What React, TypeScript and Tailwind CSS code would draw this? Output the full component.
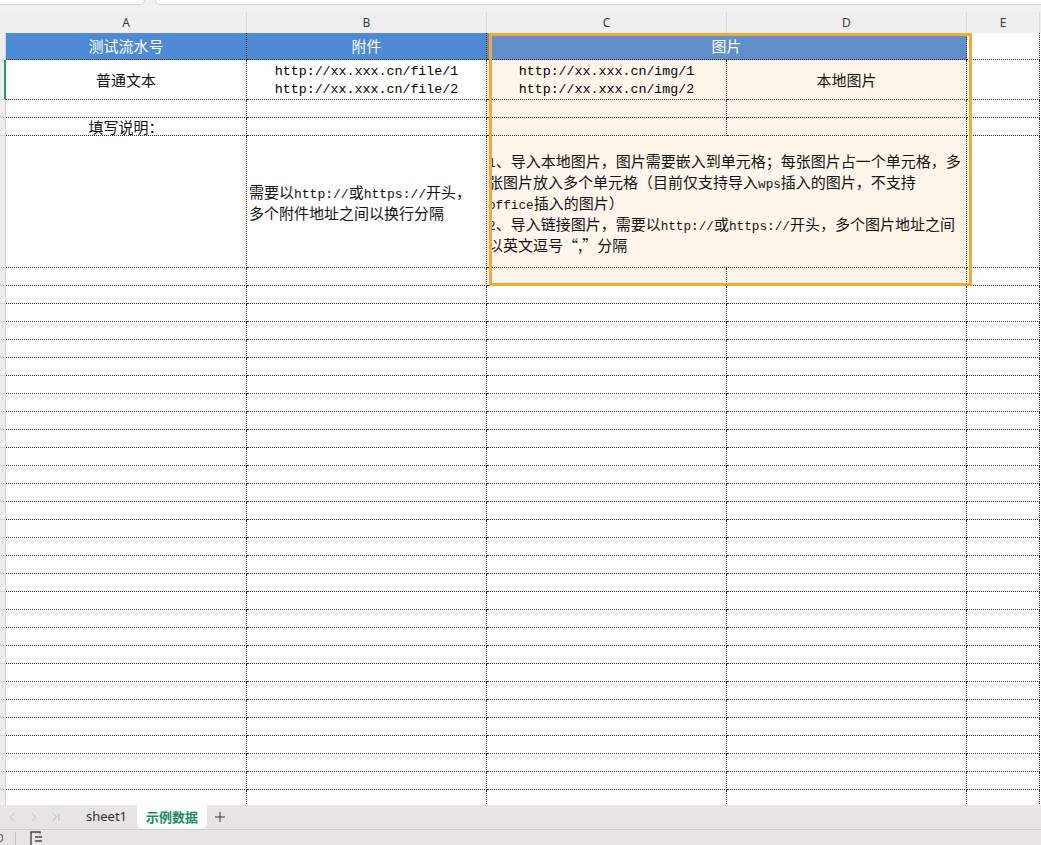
import { ChevronLeft, ChevronRight, ChevronLast, Plus } from "lucide-react";
import type { ReactNode } from "react";

const cjk = "font-['Noto_Sans_CJK_SC',sans-serif]";
const grid = "border-r border-b border-dotted border-[#2a2a2a]";
const cream = "bg-[#fff6ec]";

// latin run inside a CJK cell (SimSun-like half width)
function M({ children, size = "text-[13px]" }: { children: ReactNode; size?: string }) {
  return <span className={`font-['Liberation_Mono',monospace] ${size}`}>{children}</span>;
}

function RowHead({ h, active }: { h: string; active?: boolean }) {
  return (
    <div
      className={`${h} w-[6px] shrink-0 border-b border-solid border-b-[#d6d6d6] bg-[#efefef] ${
        active ? "border-r-2 border-r-[#1f9d6a]" : "border-r border-r-[#d4d4d4]"
      }`}
    />
  );
}

function Cell({
  w,
  className = "",
  clip = true,
  children,
}: {
  w: string;
  className?: string;
  clip?: boolean;
  children?: ReactNode;
}) {
  return (
    <div className={`${w} h-full shrink-0 ${clip ? "overflow-hidden" : "overflow-visible"} ${grid} ${className}`}>
      {children}
    </div>
  );
}

export default function App() {
  const blank = Array.from({ length: 30 });

  return (
    <div className={`flex h-[845px] w-[1041px] flex-col overflow-hidden bg-white text-[15px] text-[#111] ${cjk}`}>
      {/* top strip */}
      <div className="relative h-[12px] shrink-0 bg-[#f1f1f1]">
        <div className="absolute -left-2 top-0 h-[5px] w-[153px] rounded-b-[6px] border border-t-0 border-[#d5d5d5] bg-white" />
        <div className="absolute left-[155px] top-0 h-[5px] w-[900px] rounded-bl-[6px] border border-t-0 border-[#d5d5d5] bg-white" />
      </div>

      {/* column letters */}
      <div className="flex h-[21px] shrink-0 bg-[#efefef] font-['Noto_Sans',sans-serif] text-[12px] text-[#3a3a3a]">
        <div className="w-[6px] shrink-0" />
        {[
          ["A", "w-[241px]"],
          ["B", "w-[240px]"],
          ["C", "w-[240px]"],
          ["D", "w-[240px]"],
          ["E", "w-[73px]"],
        ].map(([l, w]) => (
          <div key={l} className={`${w} flex shrink-0 items-center justify-center border-r border-[#d9d9d9] pt-[1px]`}>
            {l}
          </div>
        ))}
      </div>

      {/* sheet */}
      <div className="relative min-h-0 flex-1 overflow-hidden">
        {/* row 1 */}
        <div className="flex h-[27px]">
          <RowHead h="h-[27px]" />
          <Cell w="w-[241px]" className="flex items-center justify-center bg-[#4f8ad5] pt-[1px] text-white">
            测试流水号
          </Cell>
          <Cell w="w-[240px]" className="flex items-center justify-center bg-[#4f8ad5] pt-[1px] text-white">
            附件
          </Cell>
          <Cell w="w-[480px]" className="flex items-center justify-center bg-[#5f90c9] pt-[1px] text-white">
            图片
          </Cell>
          <Cell w="w-[73px]" />
        </div>

        {/* row 2 */}
        <div className="flex h-[40px]">
          <RowHead h="h-[40px]" active />
          <Cell w="w-[241px]" className="flex items-center justify-center pt-[2px]">
            普通文本
          </Cell>
          <Cell w="w-[240px]" className="flex flex-col items-center justify-center pt-[3px] leading-[18px] text-black">
            <M size="text-[13.3px]">http://xx.xxx.cn/file/1</M>
            <M size="text-[13.3px]">http://xx.xxx.cn/file/2</M>
          </Cell>
          <Cell w="w-[240px]" className={`flex flex-col items-center justify-center pt-[3px] leading-[18px] text-black ${cream}`}>
            <M size="text-[13.3px]">http://xx.xxx.cn/img/1</M>
            <M size="text-[13.3px]">http://xx.xxx.cn/img/2</M>
          </Cell>
          <Cell w="w-[240px]" className={`flex items-center justify-center pt-[2px] ${cream}`}>
            本地图片
          </Cell>
          <Cell w="w-[73px]" />
        </div>

        {/* row 3 */}
        <div className="flex h-[18px]">
          <RowHead h="h-[18px]" />
          <Cell w="w-[241px]" />
          <Cell w="w-[240px]" />
          <Cell w="w-[240px]" className={cream} />
          <Cell w="w-[240px]" className={cream} />
          <Cell w="w-[73px]" />
        </div>

        {/* row 4 */}
        <div className="flex h-[18px]">
          <RowHead h="h-[18px]" />
          <Cell w="w-[241px]" clip={false} className="flex items-center justify-center leading-[16px]">
            填写说明：
          </Cell>
          <Cell w="w-[240px]" />
          <Cell w="w-[240px]" className={cream} />
          <Cell w="w-[240px]" className={cream} />
          <Cell w="w-[73px]" />
        </div>

        {/* row 5 */}
        <div className="flex h-[132px]">
          <RowHead h="h-[132px]" />
          <Cell w="w-[241px]" />
          <Cell w="w-[240px]" className="flex flex-col justify-center whitespace-nowrap pl-[2px] pt-[2px] leading-[18px]">
            <div>
              需要以<M>http://</M>或<M>https://</M>开头，
            </div>
            <div>多个附件地址之间以换行分隔</div>
          </Cell>
          <Cell w="w-[480px]" className={`flex flex-col justify-center whitespace-nowrap pl-[1px] pt-[2px] leading-[18px] ${cream}`}>
            <div>
              <M size="text-[12.7px]">1</M>、导入本地图片，图片需要嵌入到单元格；每张图片占一个单元格，多
            </div>
            <div>
              张图片放入多个单元格（目前仅支持导入<M size="text-[12.7px]">wps</M>插入的图片，不支持
            </div>
            <div>
              <M size="text-[12.7px]">office</M>插入的图片）
            </div>
            <div>
              <M size="text-[12.7px]">2</M>、导入链接图片，需要以<M size="text-[12.7px]">http://</M>或
              <M size="text-[12.7px]">https://</M>开头，多个图片地址之间
            </div>
            <div>以英文逗号“,”分隔</div>
          </Cell>
          <Cell w="w-[73px]" />
        </div>

        {/* row 6 */}
        <div className="flex h-[18px]">
          <RowHead h="h-[18px]" />
          <Cell w="w-[241px]" />
          <Cell w="w-[240px]" />
          <Cell w="w-[240px]" className={cream} />
          <Cell w="w-[240px]" className={cream} />
          <Cell w="w-[73px]" />
        </div>

        {blank.map((_, i) => (
          <div key={i} className="flex h-[18px]">
            <RowHead h="h-[18px]" />
            <Cell w="w-[241px]" />
            <Cell w="w-[240px]" />
            <Cell w="w-[240px]" />
            <Cell w="w-[240px]" />
            <Cell w="w-[73px]" />
          </div>
        ))}

        {/* selection frame over C1:D6 */}
        <div className="pointer-events-none absolute left-[489px] top-0 h-[253px] w-[483px] border-[3px] border-[#f7a733]" />
      </div>

      {/* sheet tabs */}
      <div className="flex h-[24px] shrink-0 items-center bg-[#e9e4e4] font-['Noto_Sans',sans-serif] text-[13px]">
        <ChevronLeft className="ml-[5px] h-[14px] w-[14px] text-[#b3aeae]" strokeWidth={1.5} />
        <ChevronRight className="ml-[8px] h-[14px] w-[14px] text-[#b3aeae]" strokeWidth={1.5} />
        <ChevronLast className="ml-[8px] h-[14px] w-[14px] text-[#b3aeae]" strokeWidth={1.5} />
        <span className="ml-[23px] text-[#2b2b2b]">sheet1</span>
        <div className={`ml-[10px] flex h-full w-[70px] items-center justify-center rounded-b-[6px] bg-white text-[13px] font-semibold text-[#178a5e] ${cjk}`}>
          示例数据
        </div>
        <Plus className="ml-[5px] h-[16px] w-[16px] text-[#333]" strokeWidth={1.5} />
      </div>

      {/* status bar */}
      <div className="flex h-[16px] shrink-0 items-end border-t border-[#d2cdcd] bg-[#e9e4e4]">
        <div className="-ml-[3px] mb-[3px] h-[8px] w-[6px] rounded-r-[3px] border-[1.5px] border-l-0 border-[#555]" />
        <div className="ml-[12px] h-[13px] w-px bg-[#c3bebe]" />
        <svg className="ml-[13px]" width="15" height="14" viewBox="0 0 15 14" fill="none" stroke="#444" strokeWidth="1.4">
          <path d="M11 2.5 V1 H2 V14" />
          <path d="M6 6 H13 M6 10 H13" />
        </svg>
      </div>
    </div>
  );
}
